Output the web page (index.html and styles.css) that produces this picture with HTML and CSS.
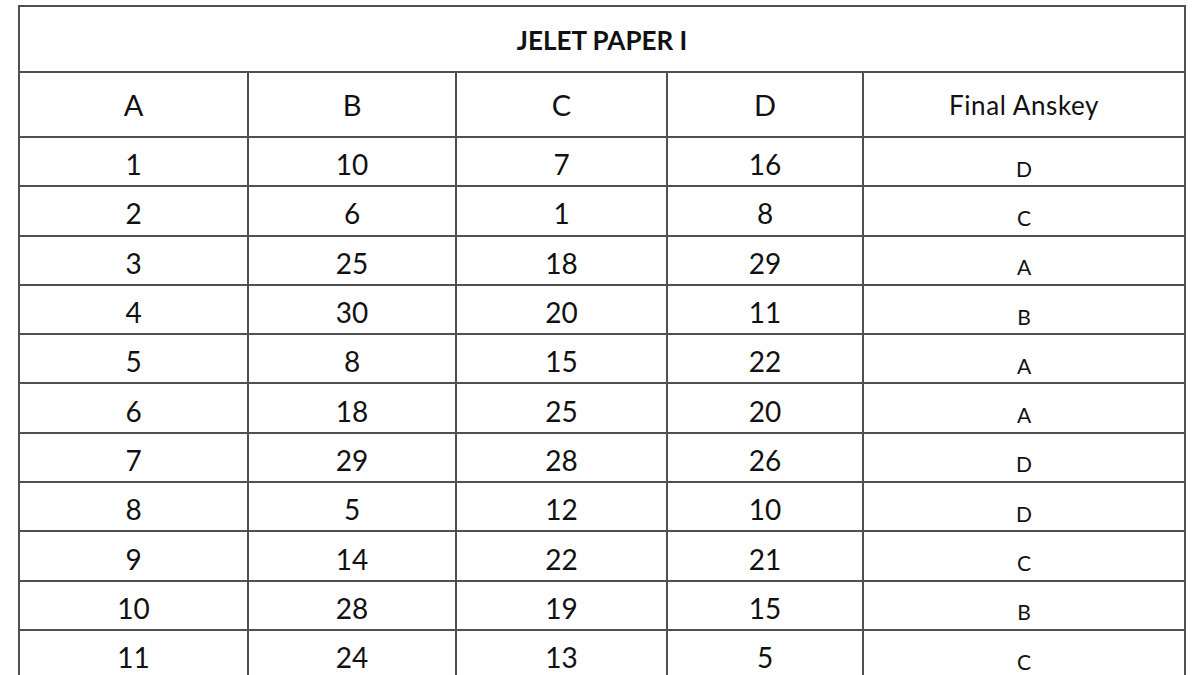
FILE: index.html
```html
<!DOCTYPE html>
<html>
<head>
<meta charset="utf-8">
<link rel="stylesheet" href="styles.css">
</head>
<body>
<table class="key">
  <colgroup>
    <col class="c1"><col class="c2"><col class="c3"><col class="c4"><col class="c5">
  </colgroup>
  <tr class="title-row"><th colspan="5">JELET PAPER I</th></tr>
  <tr class="head-row"><td>A</td><td>B</td><td>C</td><td>D</td><td class="fa">Final Anskey</td></tr>
  <tr><td>1</td><td>10</td><td>7</td><td>16</td><td class="ans">D</td></tr>
  <tr><td>2</td><td>6</td><td>1</td><td>8</td><td class="ans">C</td></tr>
  <tr><td>3</td><td>25</td><td>18</td><td>29</td><td class="ans">A</td></tr>
  <tr><td>4</td><td>30</td><td>20</td><td>11</td><td class="ans">B</td></tr>
  <tr><td>5</td><td>8</td><td>15</td><td>22</td><td class="ans">A</td></tr>
  <tr><td>6</td><td>18</td><td>25</td><td>20</td><td class="ans">A</td></tr>
  <tr><td>7</td><td>29</td><td>28</td><td>26</td><td class="ans">D</td></tr>
  <tr><td>8</td><td>5</td><td>12</td><td>10</td><td class="ans">D</td></tr>
  <tr><td>9</td><td>14</td><td>22</td><td>21</td><td class="ans">C</td></tr>
  <tr><td>10</td><td>28</td><td>19</td><td>15</td><td class="ans">B</td></tr>
  <tr><td>11</td><td>24</td><td>13</td><td>5</td><td class="ans">C</td></tr>
</table>
</body>
</html>
```
FILE: styles.css
```css
html, body {
  margin: 0;
  padding: 0;
  background: #ffffff;
}
body {
  padding: 5px 0 0 18px;
  font-family: Lato, "Open Sans", sans-serif;
  color: #111;
  overflow: hidden;
}
.key {
  border-collapse: collapse;
  table-layout: fixed;
  width: 1166px;
}
.c1 { width: 229px; }
.c2 { width: 208px; }
.c3 { width: 211px; }
.c4 { width: 196px; }
.c5 { width: 322px; }
.key th, .key td {
  border: 2px solid #505050;
  text-align: center;
  padding: 0;
  line-height: 1;
}
.key td {
  height: 49.3px;
  font-size: 28px;
  padding-top: 5px;
  box-sizing: border-box;
}
.title-row th {
  height: 66px;
  font-size: 26px;
  font-weight: 700;
  padding-top: 2px;
  box-sizing: border-box;
}
.head-row td {
  height: 65px;
  font-size: 29px;
  padding-top: 0;
}
.head-row td.fa {
  font-size: 26px;
  letter-spacing: 0.6px;
}
.key td.ans {
  font-size: 21px;
  padding-top: 13px;
}
```
